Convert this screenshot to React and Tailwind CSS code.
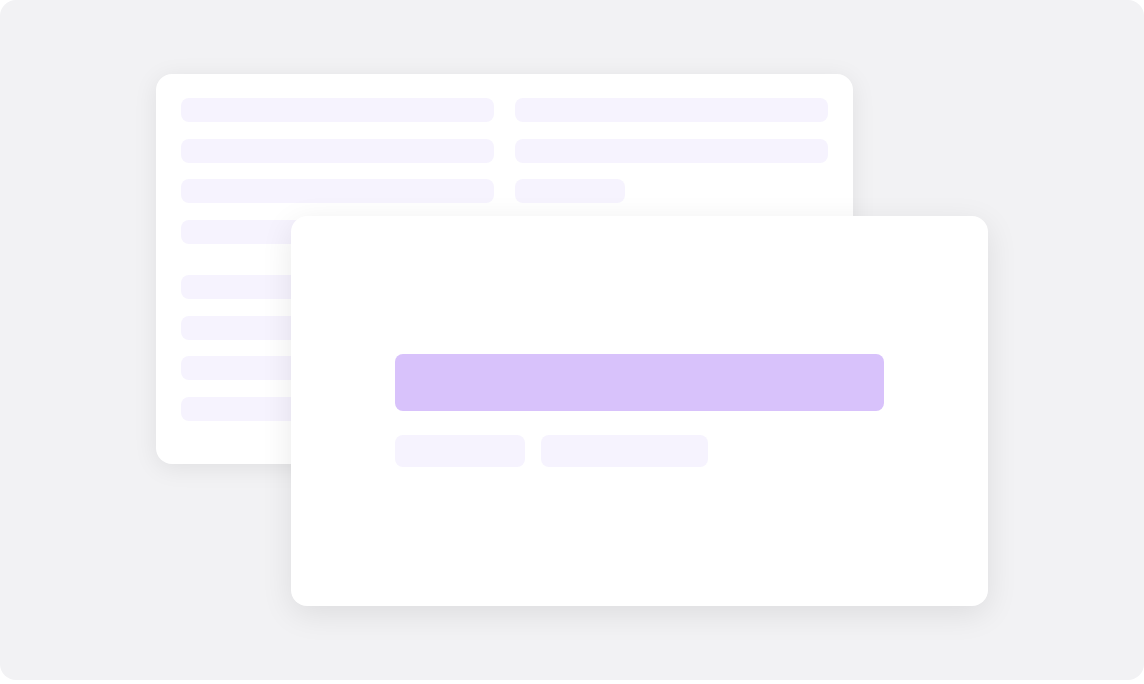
export default function App() {
  const leftRows = [
    "w-[313px]",
    "w-[313px]",
    "w-[313px]",
    "w-[313px]",
  ];

  return (
    <div className="w-[1144px] h-[684px] bg-white">
      <div className="w-[1144px] h-[680px] rounded-2xl bg-[#f2f2f4] overflow-hidden">
        {/* stacked cards */}
        <div className="grid pt-[74px] pl-[156px]">
          {/* back card */}
          <div className="col-start-1 row-start-1 w-[697px] h-[390px] rounded-2xl bg-white shadow-[0_4px_24px_rgba(0,0,0,0.08)] px-[25px] pt-6">
            <div className="flex gap-[21px]">
              <div className="flex flex-col">
                <div className="flex flex-col gap-[16.7px]">
                  {leftRows.map((w, i) => (
                    <div key={i} className={`${w} h-6 rounded-lg bg-[#f6f3fe]`} />
                  ))}
                </div>
                <div className="flex flex-col gap-[16.7px] mt-[31px]">
                  {leftRows.map((w, i) => (
                    <div key={i} className={`${w} h-6 rounded-lg bg-[#f6f3fe]`} />
                  ))}
                </div>
              </div>
              <div className="flex flex-col gap-[16.7px]">
                <div className="w-[313px] h-6 rounded-lg bg-[#f6f3fe]" />
                <div className="w-[313px] h-6 rounded-lg bg-[#f6f3fe]" />
                <div className="w-[110px] h-6 rounded-lg bg-[#f6f3fe]" />
              </div>
            </div>
          </div>

          {/* front card */}
          <div className="col-start-1 row-start-1 ml-[135px] mt-[142px] w-[697px] h-[390px] rounded-2xl bg-white shadow-[0_8px_32px_rgba(0,0,0,0.09)] flex flex-col justify-center px-[104px] pb-[1px]">
            <div className="h-[57px] rounded-lg bg-[#d8c2fb]" />
            <div className="flex gap-4 mt-6">
              <div className="w-[130px] h-8 rounded-lg bg-[#f6f3fe]" />
              <div className="w-[167px] h-8 rounded-lg bg-[#f6f3fe]" />
            </div>
          </div>
        </div>
      </div>
    </div>
  );
}
